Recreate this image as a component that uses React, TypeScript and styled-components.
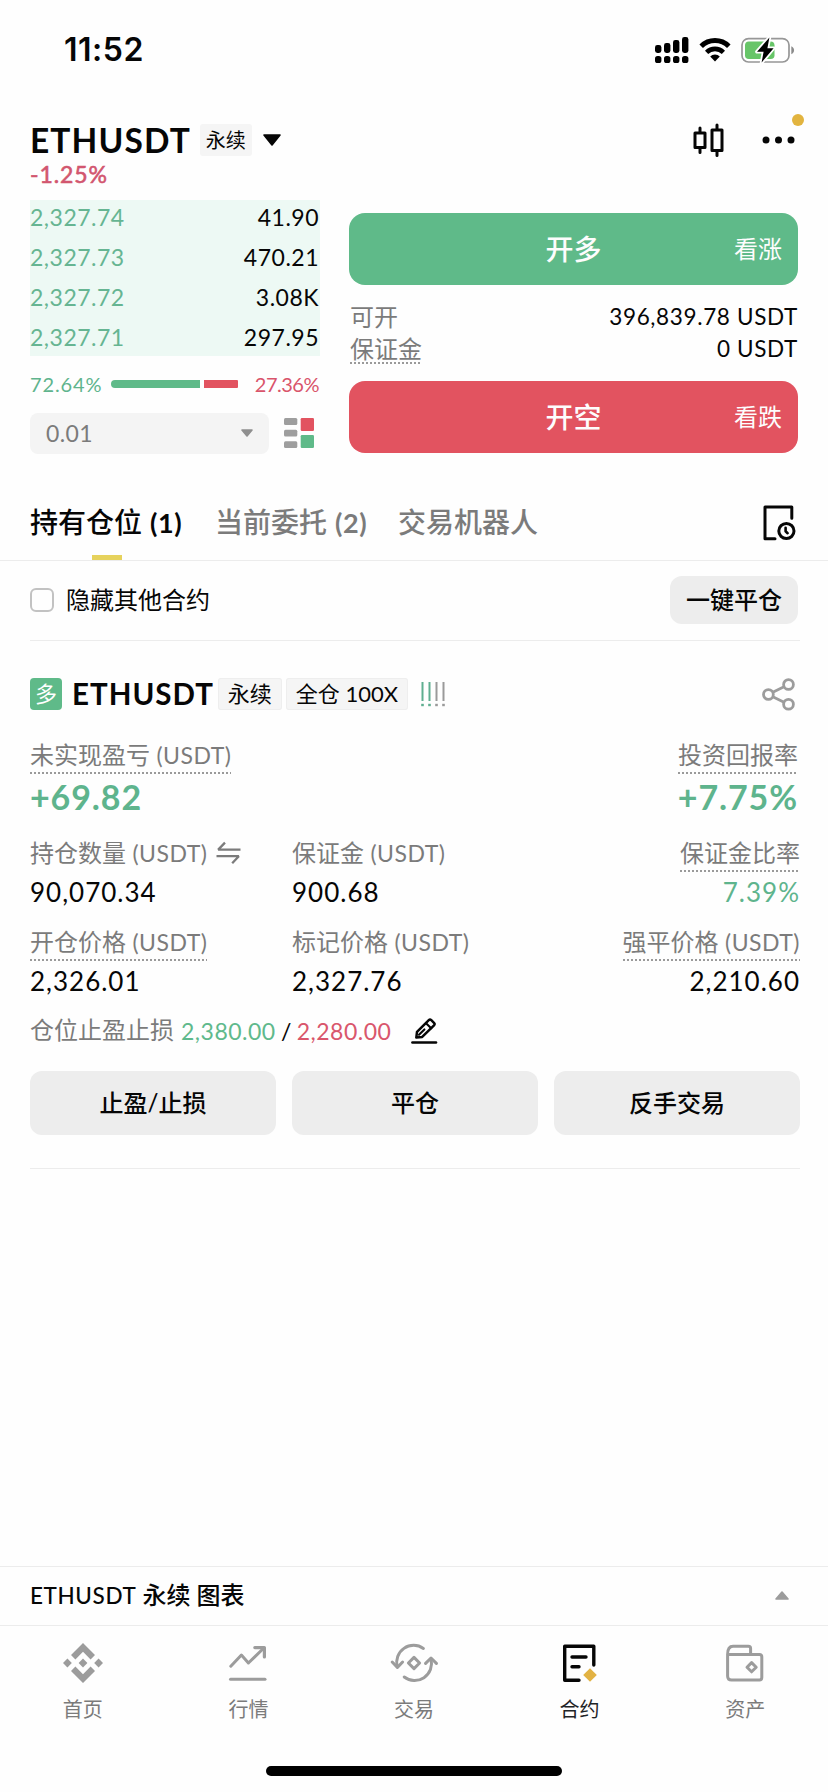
import React from "react";
import styled, { createGlobalStyle } from "styled-components";

const GREEN = "#5fba89";
const RED = "#e25360";
const GREY = "#7b7b7b";
const ICON_GREY = "#9c9c9c";
const LINE = "#ececec";
const SOFT = "#ededed";

const Global = createGlobalStyle`
  * { box-sizing: border-box; }
  html, body { margin: 0; padding: 0; background: #fefefe; }
  body {
    font-family: Lato, "Noto Sans CJK SC", sans-serif;
    color: #060606;
    font-size: 24px;
  }
  button { font: inherit; color: inherit; border: 0; padding: 0; margin: 0; }
  svg { display: block; flex: none; }
`;

const Screen = styled.div`
  width: 828px;
  height: 1792px;
  display: flex;
  flex-direction: column;
  background: #fefefe;
  overflow: hidden;
  white-space: nowrap;
`;

const StatusBar = styled.header`
  height: 100px;
  flex: none;
  display: flex;
  justify-content: space-between;
  align-items: center;
  padding: 0 33px 0 64px;
`;

const Clock = styled.span`
  font-family: Inter, "Liberation Sans", sans-serif;
  font-size: 32px;
  font-weight: 600;
  line-height: 40px;
  letter-spacing: 0.5px;
`;

const StatusIcons = styled.div`
  display: flex;
  align-items: center;
  gap: 10px;
`;

const PairHeader = styled.section`
  height: 100px;
  flex: none;
  padding: 20px 28px 0 30px;
`;

const PairRow = styled.div`
  display: flex;
  align-items: center;
  height: 40px;
`;

const PairName = styled.h1<{ $size: number; $spacing?: number }>`
  margin: 0;
  font-size: ${(p) => p.$size}px;
  line-height: 40px;
  font-weight: 700;
  letter-spacing: ${(p) => p.$spacing ?? 0}px;
`;

const Tag = styled.span<{ $width: number; $size?: number; $framed?: boolean; $before?: number; $after?: number }>`
  width: ${(p) => p.$width}px;
  height: 32px;
  line-height: 32px;
  margin: 0 ${(p) => p.$after ?? 0}px 0 ${(p) => p.$before ?? 0}px;
  font-size: ${(p) => p.$size ?? 22}px;
  text-align: center;
  background: #f5f5f5;
  box-shadow: ${(p) => (p.$framed ? "inset 0 0 0 1px #eeeeee" : "none")};
  border-radius: 3px;
`;

const HeaderActions = styled.div`
  position: relative;
  display: flex;
  align-items: center;
  gap: 38px;
  margin-left: auto;
  padding-right: 5px;
`;

const Dot = styled.i`
  position: absolute;
  right: -4px;
  top: -9px;
  width: 12px;
  height: 12px;
  border-radius: 50%;
  background: #e2b43f;
`;

const Change = styled.div`
  font-size: 23px;
  line-height: 28px;
  color: #d2566f;
  letter-spacing: 0.9px;
  -webkit-text-stroke: 0.6px currentColor;
`;

const TradeArea = styled.section`
  height: 290px;
  flex: none;
  display: grid;
  grid-template-columns: 290px 449px;
  column-gap: 29px;
  padding-left: 30px;
`;

const BookRows = styled.div`
  height: 156px;
  background: #edf9f4;
`;

const BookRow = styled.div`
  display: flex;
  justify-content: space-between;
  height: 40px;
  line-height: 34px;
  font-size: 23px;
  letter-spacing: 0.5px;
  padding-right: 1px;
`;

const Price = styled.span`
  color: #66b592;
`;

const RatioRow = styled.div`
  display: flex;
  align-items: center;
  height: 56px;
  font-size: 20px;
`;

const RatioText = styled.span<{ $down?: boolean }>`
  color: ${(p) => (p.$down ? "#d9546b" : "#5fb48d")};
  width: 81px;
  text-align: ${(p) => (p.$down ? "right" : "left")};
  letter-spacing: ${(p) => (p.$down ? -0.5 : 0.9)}px;
`;

const RatioBar = styled.div`
  display: flex;
  gap: 4px;
  width: 127px;
  height: 8px;
`;

const RatioPart = styled.i<{ $down?: boolean }>`
  width: ${(p) => (p.$down ? 34 : 89)}px;
  height: 8px;
  background: ${(p) => (p.$down ? RED : GREEN)};
  border-radius: ${(p) => (p.$down ? "0 1px 1px 0" : "4px 0 0 4px")};
`;

const StepRow = styled.div`
  display: flex;
  align-items: center;
  gap: 15px;
  height: 42px;
`;

const StepSelect = styled.div`
  display: flex;
  align-items: center;
  justify-content: space-between;
  width: 239px;
  height: 41px;
  padding: 0 16px;
  border-radius: 8px;
  background: #f4f4f4;
  color: ${GREY};
  font-size: 23px;
  letter-spacing: 0.4px;
  line-height: 40px;
`;

const OrderPanel = styled.div`
  padding-top: 13px;
`;

const OpenButton = styled.button<{ $short?: boolean }>`
  display: grid;
  grid-template-columns: 1fr auto 1fr;
  align-items: center;
  width: 449px;
  height: 72px;
  padding: 0 16px 1px;
  border-radius: 16px;
  background: ${(p) => (p.$short ? RED : GREEN)};
  color: #fdfdfd;
  font-size: 28px;
  font-weight: 500;
  line-height: 40px;
`;

const OpenHint = styled.span`
  font-size: 24px;
  font-weight: 400;
  text-align: right;
`;

const Limits = styled.div`
  height: 96px;
  padding: 16px 0 0 1px;
`;

const LimitRow = styled.div`
  display: flex;
  justify-content: space-between;
  height: 32px;
  line-height: 32px;
`;

const LimitValue = styled.span`
  font-size: 22.5px;
  letter-spacing: 0.65px;
`;

const Label = styled.span<{ $dotted?: boolean; $height?: number }>`
  display: inline-block;
  height: ${(p) => p.$height ?? 34}px;
  line-height: 32px;
  color: ${GREY};
  font-size: 24px;
  background: ${(p) =>
    p.$dotted
      ? "repeating-linear-gradient(90deg, #9a9a9a 0 2px, transparent 2px 4px) left bottom / 100% 2px no-repeat"
      : "none"};
`;

const Unit = styled.span`
  font-size: 23px;
  letter-spacing: 0.5px;
`;

const Tabs = styled.nav`
  flex: none;
  height: 71px;
  display: flex;
  align-items: stretch;
  padding: 0 32px 0 30px;
  border-bottom: 1px solid ${LINE};
`;

const Tab = styled.div<{ $active?: boolean; $width: number }>`
  position: relative;
  width: ${(p) => p.$width}px;
  line-height: 64px;
  font-size: 28px;
  font-weight: 500;
  color: ${(p) => (p.$active ? "#060606" : GREY)};
`;

const TabCount = styled.b`
  font-size: 27px;
  font-weight: 700;
  margin-left: 8px;
  letter-spacing: 0.6px;
`;

const TabMark = styled.i`
  position: absolute;
  left: 62px;
  bottom: 0;
  width: 30px;
  height: 5px;
  background: #e6d25c;
`;

const TabAction = styled.div`
  margin-left: auto;
  padding-top: 15px;
`;

const FilterRow = styled.section`
  flex: none;
  height: 80px;
  margin: 0 28px 0 30px;
  display: flex;
  align-items: center;
  border-bottom: 1px solid ${LINE};
  padding: 0 2px 1px 0;
  line-height: 32px;
`;

const Checkbox = styled.i`
  width: 24px;
  height: 24px;
  border: 2px solid #c2c2c2;
  border-radius: 6px;
  margin-right: 12px;
`;

const SoftButton = styled.button<{ $width: number; $height: number }>`
  width: ${(p) => p.$width}px;
  height: ${(p) => p.$height}px;
  border-radius: 12px;
  background: ${SOFT};
  font-size: 24px;
  font-weight: 500;
  line-height: 32px;
`;

const Position = styled.section`
  flex: none;
  height: 528px;
  margin: 0 28px 0 30px;
  padding-top: 33px;
  border-bottom: 1px solid ${LINE};
`;

const SideBadge = styled.span`
  width: 32px;
  height: 32px;
  margin-right: 10px;
  border-radius: 4px;
  background: ${GREEN};
  color: #fff;
  font-size: 22px;
  line-height: 31px;
  text-align: center;
`;

const Stats = styled.div<{ $height: number; $top?: number }>`
  display: grid;
  grid-template-columns: 262px 1fr auto;
  padding-top: ${(p) => p.$top ?? 0}px;
  height: ${(p) => p.$height}px;
`;

const Stat = styled.div<{ $end?: boolean; $inset?: number }>`
  display: flex;
  flex-direction: column;
  align-items: ${(p) => (p.$end ? "flex-end" : "flex-start")};
  padding-right: ${(p) => p.$inset ?? 0}px;
`;

const LabelLine = styled.div`
  display: flex;
  gap: 9px;
  height: 36px;
`;

const SwapSlot = styled.span`
  padding-top: 4px;
`;

const Value = styled.strong<{ $big?: boolean; $up?: boolean }>`
  font-size: ${(p) => (p.$big ? 34 : 26)}px;
  font-weight: ${(p) => (p.$big ? 700 : 400)};
  line-height: ${(p) => (p.$big ? 44 : 38)}px;
  color: ${(p) => (p.$up ? "#5eb48d" : "#060606")};
  letter-spacing: ${(p) => (p.$big ? 0.9 : 1)}px;
`;

const StopRow = styled.div`
  display: flex;
  align-items: center;
  height: 32px;
  margin-top: 12px;
  font-size: 23px;
`;

const StopLabel = styled(Label)`
  margin-right: 7px;
`;

const StopPrice = styled.span<{ $down?: boolean }>`
  color: ${(p) => (p.$down ? "#d9566c" : "#5fb98c")};
  letter-spacing: 0.5px;
`;

const Slash = styled.span`
  width: 21px;
  text-align: center;
`;

const EditSlot = styled.span`
  margin-left: 20px;
`;

const ActionRow = styled.div`
  display: flex;
  gap: 16px;
  margin-top: 24px;
`;

const Spacer = styled.div`
  flex: 1;
`;

const ChartBar = styled.section`
  flex: none;
  height: 60px;
  display: flex;
  align-items: center;
  justify-content: space-between;
  padding: 0 39px 1px 30px;
  border-top: 1px solid ${LINE};
  border-bottom: 1px solid ${LINE};
  font-weight: 500;
  line-height: 32px;
`;

const ChartPair = styled.span`
  font-size: 22.5px;
  letter-spacing: 0.6px;
`;

const NavBar = styled.nav`
  flex: none;
  height: 140px;
  display: grid;
  grid-template-columns: repeat(5, 1fr);
  padding-top: 17px;
`;

const NavItem = styled.div<{ $active?: boolean }>`
  display: flex;
  flex-direction: column;
  align-items: center;
  gap: 11px;
  font-size: 20px;
  line-height: 30px;
  color: ${(p) => (p.$active ? "#1f2427" : GREY)};
`;

const HomeIndicator = styled.i`
  flex: none;
  width: 296px;
  height: 10px;
  margin: 0 auto 16px;
  border-radius: 5px;
  background: #000;
`;

const Triangle = ({ w, h, up, color }: { w: number; h: number; up?: boolean; color: string }) => (
  <svg width={w} height={h} viewBox={`0 0 ${w} ${h}`}>
    <path
      d={up ? `M1 ${h - 1}L${w / 2} 1L${w - 1} ${h - 1}Z` : `M1 1H${w - 1}L${w / 2} ${h - 1}Z`}
      fill={color}
      stroke={color}
      strokeWidth="1.6"
      strokeLinejoin="round"
    />
  </svg>
);

const SignalIcon = () => (
  <svg width="34" height="26" viewBox="0 0 34 26">
    {[8, 6, 3, 0].map((top, i) => (
      <g key={top}>
        <rect x={i * 9} y={top} width="6.4" height={16 - top} rx="2.4" />
        <rect x={i * 9} y="19" width="6.4" height="7" rx="2.6" />
      </g>
    ))}
  </svg>
);

const WifiIcon = () => (
  <svg width="32" height="24" viewBox="0 0 32 24" fill="none" stroke="#000">
    <path d="M2.2 8.2A19.6 19.6 0 0 1 29.8 8.2" strokeWidth="5" />
    <path d="M7.6 14.3A12 12 0 0 1 24.4 14.3" strokeWidth="4.6" />
    <path d="M11.2 18.4A6.9 6.9 0 0 1 20.8 18.4L16 23.4Z" fill="#000" stroke="none" />
  </svg>
);

const BatteryIcon = () => (
  <svg width="54" height="28" viewBox="0 0 54 28">
    <rect x="1" y="2.6" width="47" height="23.4" rx="6.5" fill="#fff" stroke="#979797" strokeWidth="1.7" />
    <rect x="4" y="5.5" width="29.5" height="17.5" rx="3.8" fill="#67c568" />
    <path d="M50.3 10.3C54 11.7 54 16.9 50.3 18.3Z" fill="#8b8b8b" />
    <path
      d="M28.4 1.6L16 15.8H22.6L20.6 26.6L32.6 12.2H26.4Z"
      fill="#000"
      stroke="#fff"
      strokeWidth="3.6"
      strokeLinejoin="round"
      paintOrder="stroke"
    />
  </svg>
);

const CandlesIcon = () => (
  <svg width="31" height="34" viewBox="0 0 31 34" fill="none" stroke="#060606" strokeWidth="3" strokeLinecap="round" strokeLinejoin="round">
    <rect x="2" y="10" width="10" height="14.5" />
    <path d="M7 5V9M7 25V29.5" />
    <rect x="19" y="7" width="10" height="20.5" />
    <path d="M24 2V6M24 28V32.5" />
  </svg>
);

const MoreIcon = () => (
  <svg width="33" height="8" viewBox="0 0 33 8">
    {[4, 16.5, 29].map((x) => (
      <circle key={x} cx={x} cy="4" r="3.5" fill="#060606" />
    ))}
  </svg>
);

const BookModeIcon = () => (
  <svg width="30" height="30" viewBox="0 0 30 30">
    <g fill="#9e9e9e">
      <rect y="0" width="13.3" height="7" rx="1.5" />
      <rect y="11.8" width="13.3" height="6.6" rx="1.5" />
      <rect y="23.2" width="13.3" height="6.8" rx="1.5" />
    </g>
    <rect x="16.7" width="13.3" height="13" rx="1.3" fill={RED} />
    <rect x="16.7" y="17" width="13.3" height="13" rx="1.3" fill={GREEN} />
  </svg>
);

const HistoryIcon = () => (
  <svg width="33" height="36" viewBox="0 0 33 36" fill="none" stroke="#060606" strokeWidth="3" strokeLinecap="round" strokeLinejoin="round">
    <path d="M12 33.8H2V2H28.8V13.2" />
    <circle cx="23.4" cy="26" r="7.6" />
    <path d="M22.6 22.8V26.3L24.6 28.2" strokeWidth="2.6" />
  </svg>
);

const RiskBars = () => (
  <svg width="25" height="25" viewBox="0 0 25 25">
    {["#5fae90", "#5fae90", "#9a9a9a", "#9a9a9a"].map((color, i) => (
      <g key={i} fill={color}>
        <rect x={0.5 + i * 7} y="0" width="2" height="19" />
        <rect x={0.2 + i * 7} y="21.8" width="2.6" height="2.4" />
      </g>
    ))}
  </svg>
);

const ShareIcon = () => (
  <svg width="33" height="33" viewBox="0 0 33 33" fill="none" stroke={ICON_GREY} strokeWidth="2.8">
    <circle cx="6.4" cy="16.5" r="4.9" />
    <circle cx="26.5" cy="6.5" r="4.9" />
    <circle cx="26.5" cy="26.3" r="4.9" />
    <path d="M10.8 14.3L22 8.8M10.8 18.7L22 24.2" />
  </svg>
);

const SwapIcon = () => (
  <svg width="25" height="24" viewBox="0 0 25 24" fill="none" stroke={GREY} strokeWidth="2.3">
    <path d="M24.5 8.6H2.2L9 1.6" strokeLinejoin="bevel" />
    <path d="M0.5 15.2H22.8L16.2 22.2" strokeLinejoin="bevel" />
  </svg>
);

const EditIcon = () => (
  <svg width="27" height="26" viewBox="0 0 27 26" fill="none" stroke="#060606" strokeWidth="2.5" strokeLinecap="round" strokeLinejoin="round">
    <path d="M1.4 24.4H25" />
    <path d="M5.3 19.6L6 13.9L17.8 2.2Q19 1 20.3 2.1L23 4.8Q24.2 6 23 7.3L11.2 18.9Z" />
    <path d="M15 5.2L20.2 10.2M8 16.8L13.4 11.4" strokeWidth="2.1" />
  </svg>
);

const HomeIcon = () => (
  <svg width="40" height="40" viewBox="0 0 40 40" fill={ICON_GREY}>
    <path d="M20 0L32 12L27.6 16.4L20 8.8L12.4 16.4L8 12Z" />
    <path d="M20 40L32 28L27.6 23.6L20 31.2L12.4 23.6L8 28Z" />
    <path d="M20 15.6L24.4 20L20 24.4L15.6 20Z" />
    <path d="M4.4 15.6L8.8 20L4.4 24.4L0 20Z" />
    <path d="M35.6 15.6L40 20L35.6 24.4L31.2 20Z" />
  </svg>
);

const MarketIcon = () => (
  <svg width="40" height="40" viewBox="0 0 40 40" fill="none" stroke={ICON_GREY} strokeWidth="3" strokeLinecap="round" strokeLinejoin="round">
    <path d="M2.8 23.2L13.4 12L20.4 20L35.6 5.2" />
    <path d="M26.8 4.6H36.4V14" strokeWidth="3.2" />
    <path d="M2.5 36.3H37" />
  </svg>
);

const TradeIcon = () => (
  <svg width="48" height="40" viewBox="0 0 48 40" fill="none" stroke={ICON_GREY} strokeWidth="3" strokeLinecap="round" strokeLinejoin="round">
    <path d="M33.4 5.4A17 17 0 0 0 7.2 23.6" />
    <path d="M2.2 19L7.4 24.4L12.6 19" />
    <path d="M14.2 34A17 17 0 0 0 41 16.2" />
    <path d="M35.6 20.4L41 15L46.4 20.4" />
    <path d="M24 14.4L29.6 20L24 25.6L18.4 20Z" />
  </svg>
);

const FuturesIcon = () => (
  <svg width="40" height="40" viewBox="0 0 40 40" fill="none" stroke="#060606" strokeWidth="3.4" strokeLinecap="round" strokeLinejoin="round">
    <path d="M19 37.2H4.7V3.2H33.8V22" />
    <path d="M12 14H26M12 23.8H19" />
    <path d="M30 25.2L36.8 32L30 38.8L23.2 32Z" fill="#e2b243" stroke="none" />
  </svg>
);

const AssetsIcon = () => (
  <svg width="40" height="40" viewBox="0 0 40 40" fill="none" stroke={ICON_GREY} strokeWidth="3" strokeLinecap="round" strokeLinejoin="round">
    <path d="M2.6 11.4V33Q2.6 37 6.6 37H34.4Q36.8 37 36.8 34.6V13.8Q36.8 11.4 34.4 11.4H2.6Q2.6 3.2 8 3.2H23.4Q25.6 3.2 25.6 5.4V11" />
    <path d="M26.6 19.6L31.2 24.2L26.6 28.8L22 24.2Z" />
  </svg>
);

const book = [
  ["2,327.74", "41.90"],
  ["2,327.73", "470.21"],
  ["2,327.72", "3.08K"],
  ["2,327.71", "297.95"],
];

const navItems = [
  { label: "首页", Icon: HomeIcon },
  { label: "行情", Icon: MarketIcon },
  { label: "交易", Icon: TradeIcon },
  { label: "合约", Icon: FuturesIcon, active: true },
  { label: "资产", Icon: AssetsIcon },
];

const Usdt = () => <Unit> (USDT)</Unit>;

export default function App() {
  return (
    <>
      <Global />
      <Screen>
        <StatusBar>
          <Clock>11:52</Clock>
          <StatusIcons>
            <SignalIcon />
            <WifiIcon />
            <BatteryIcon />
          </StatusIcons>
        </StatusBar>

        <PairHeader>
          <PairRow>
            <PairName $size={33.5} $spacing={1.1}>ETHUSDT</PairName>
            <Tag $width={52} $size={20} $before={9} $after={11}>永续</Tag>
            <Triangle w={18} h={12} color="#060606" />
            <HeaderActions>
              <CandlesIcon />
              <MoreIcon />
              <Dot />
            </HeaderActions>
          </PairRow>
          <Change>-1.25%</Change>
        </PairHeader>

        <TradeArea>
          <div>
            <BookRows>
              {book.map(([price, amount]) => (
                <BookRow key={price}>
                  <Price>{price}</Price>
                  <span>{amount}</span>
                </BookRow>
              ))}
            </BookRows>
            <RatioRow>
              <RatioText>72.64%</RatioText>
              <RatioBar>
                <RatioPart />
                <RatioPart $down />
              </RatioBar>
              <RatioText $down>27.36%</RatioText>
            </RatioRow>
            <StepRow>
              <StepSelect>
                0.01
                <Triangle w={12} h={8} color="#8f8f8f" />
              </StepSelect>
              <BookModeIcon />
            </StepRow>
          </div>
          <OrderPanel>
            <OpenButton>
              <i />
              开多
              <OpenHint>看涨</OpenHint>
            </OpenButton>
            <Limits>
              <LimitRow>
                <Label>可开</Label>
                <LimitValue>396,839.78 USDT</LimitValue>
              </LimitRow>
              <LimitRow>
                <Label $dotted $height={31}>保证金</Label>
                <LimitValue>0 USDT</LimitValue>
              </LimitRow>
            </Limits>
            <OpenButton $short>
              <i />
              开空
              <OpenHint>看跌</OpenHint>
            </OpenButton>
          </OrderPanel>
        </TradeArea>

        <Tabs>
          <Tab $active $width={185}>
            持有仓位<TabCount>(1)</TabCount>
            <TabMark />
          </Tab>
          <Tab $width={183}>
            当前委托<TabCount>(2)</TabCount>
          </Tab>
          <Tab $width={150}>交易机器人</Tab>
          <TabAction>
            <HistoryIcon />
          </TabAction>
        </Tabs>

        <FilterRow>
          <Checkbox />
          隐藏其他合约
          <Spacer />
          <SoftButton $width={128} $height={48}>一键平仓</SoftButton>
        </FilterRow>

        <Position>
          <PairRow>
            <SideBadge>多</SideBadge>
            <PairName $size={29.5} $spacing={1}>ETHUSDT</PairName>
            <Tag $width={64} $framed $before={4} $after={4}>永续</Tag>
            <Tag $width={122} $framed $after={13}>全仓 100X</Tag>
            <RiskBars />
            <HeaderActions>
              <ShareIcon />
            </HeaderActions>
          </PairRow>

          <Stats $top={25} $height={123}>
            <Stat>
              <LabelLine><Label $dotted $height={35}>未实现盈亏<Usdt /></Label></LabelLine>
              <Value $big $up>+69.82</Value>
            </Stat>
            <Stat />
            <Stat $end $inset={2}>
              <LabelLine><Label $dotted $height={35}>投资回报率</Label></LabelLine>
              <Value $big $up>+7.75%</Value>
            </Stat>
          </Stats>

          <Stats $height={89}>
            <Stat>
              <LabelLine>
                <Label>持仓数量<Usdt /></Label>
                <SwapSlot><SwapIcon /></SwapSlot>
              </LabelLine>
              <Value>90,070.34</Value>
            </Stat>
            <Stat>
              <LabelLine><Label>保证金<Usdt /></Label></LabelLine>
              <Value>900.68</Value>
            </Stat>
            <Stat $end>
              <LabelLine><Label $dotted $height={35}>保证金比率</Label></LabelLine>
              <Value $up>7.39%</Value>
            </Stat>
          </Stats>

          <Stats $height={77}>
            <Stat>
              <LabelLine><Label $dotted $height={35}>开仓价格<Usdt /></Label></LabelLine>
              <Value>2,326.01</Value>
            </Stat>
            <Stat>
              <LabelLine><Label>标记价格<Usdt /></Label></LabelLine>
              <Value>2,327.76</Value>
            </Stat>
            <Stat $end>
              <LabelLine><Label $dotted $height={35}>强平价格<Usdt /></Label></LabelLine>
              <Value>2,210.60</Value>
            </Stat>
          </Stats>

          <StopRow>
            <StopLabel>仓位止盈止损</StopLabel>
            <StopPrice>2,380.00</StopPrice>
            <Slash>/</Slash>
            <StopPrice $down>2,280.00</StopPrice>
            <EditSlot><EditIcon /></EditSlot>
          </StopRow>

          <ActionRow>
            <SoftButton $width={246} $height={64}>止盈/止损</SoftButton>
            <SoftButton $width={246} $height={64}>平仓</SoftButton>
            <SoftButton $width={246} $height={64}>反手交易</SoftButton>
          </ActionRow>
        </Position>

        <Spacer />

        <ChartBar>
          <span><ChartPair>ETHUSDT</ChartPair> 永续 图表</span>
          <Triangle w={14} h={9} up color={ICON_GREY} />
        </ChartBar>
        <NavBar>
          {navItems.map(({ label, Icon, active }) => (
            <NavItem key={label} $active={active}>
              <Icon />
              {label}
            </NavItem>
          ))}
        </NavBar>
        <HomeIndicator />
      </Screen>
    </>
  );
}
